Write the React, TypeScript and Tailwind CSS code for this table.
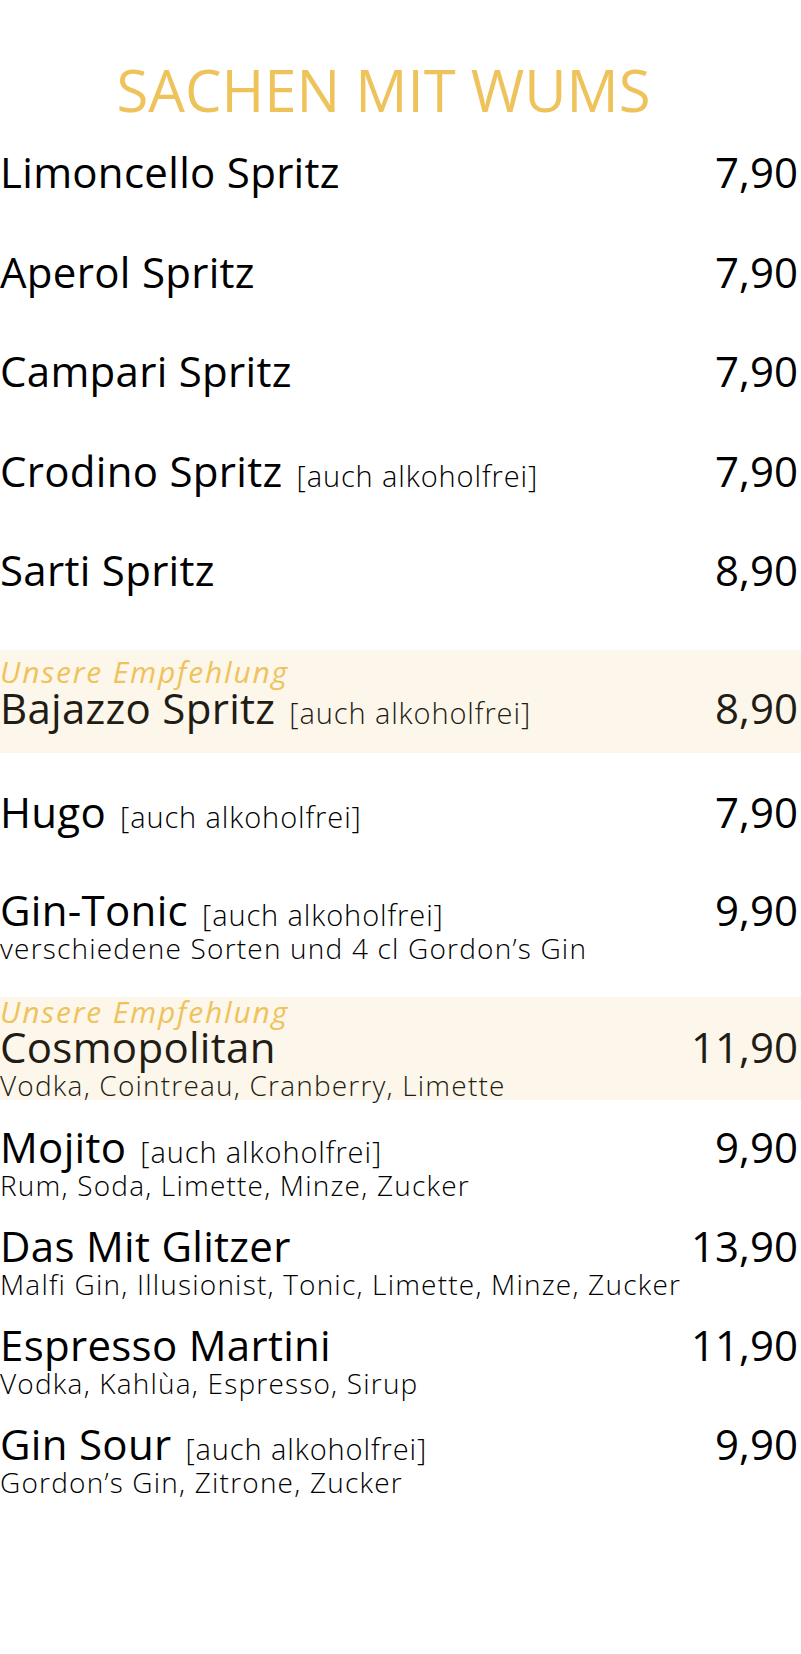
import React from "react";

type MainProps = { name: string; note?: boolean; price: string; dark?: boolean };

function MainLine({ name, note, price, dark }: MainProps) {
  return (
    <div
      className={`flex items-baseline justify-between pr-[3px] text-[42px] leading-[42px] ${
        dark ? "text-[#211c14]" : "text-black"
      }`}
    >
      <span className="whitespace-nowrap tracking-[0.3px]">
        {name}
        {note && (
          <span className="ml-[14px] text-[29px] leading-none font-light tracking-[0.9px]">
            [auch alkoholfrei]
          </span>
        )}
      </span>
      <span className="whitespace-nowrap">{price}</span>
    </div>
  );
}

function Desc({ children, dark }: { children: React.ReactNode; dark?: boolean }) {
  return (
    <div
      className={`mt-[4px] whitespace-nowrap text-[28px] leading-[26px] font-light tracking-[1.2px] ${
        dark ? "text-[#211c14]" : "text-black"
      }`}
    >
      {children}
    </div>
  );
}

function Tip() {
  return (
    <div className="whitespace-nowrap text-[30px] leading-[25px] italic font-normal tracking-[1.8px] text-[#efc35b]">
      Unsere Empfehlung
    </div>
  );
}

export default function App() {
  return (
    <div className="min-h-screen w-full bg-white font-['Open_Sans',sans-serif] text-black">
      <h1 className="pt-[61px] pr-[34px] text-center text-[58px] leading-[58px] font-normal text-[#efc35b]">
        SACHEN MIT WUMS
      </h1>

      <div className="mt-[32px] flex flex-col gap-[57.5px]">
        <MainLine name="Limoncello Spritz" price="7,90" />
        <MainLine name="Aperol Spritz" price="7,90" />
        <MainLine name="Campari Spritz" price="7,90" />
        <MainLine name="Crodino Spritz" note price="7,90" />
        <MainLine name="Sarti Spritz" price="8,90" />
      </div>

      <div className="mt-[59px] bg-[#fdf6eb] pt-[9px] pb-[24px]">
        <Tip />
        <div className="mt-[3px]">
          <MainLine name="Bajazzo Spritz" note price="8,90" dark />
        </div>
      </div>

      <div className="mt-[38px]">
        <MainLine name="Hugo" note price="7,90" />
      </div>

      <div className="mt-[56px]">
        <MainLine name="Gin-Tonic" note price="9,90" />
        <Desc>verschiedene Sorten und 4 cl Gordon’s Gin</Desc>
      </div>

      <div className="mt-[36px] bg-[#fdf6eb] pt-[2px] pb-[2px]">
        <Tip />
        <div className="mt-[2px]">
          <MainLine name="Cosmopolitan" price="11,90" dark />
        </div>
        <Desc dark>Vodka, Cointreau, Cranberry, Limette</Desc>
      </div>

      <div className="mt-[26px] flex flex-col gap-[27px]">
        <div>
          <MainLine name="Mojito" note price="9,90" />
          <Desc>Rum, Soda, Limette, Minze, Zucker</Desc>
        </div>
        <div>
          <MainLine name="Das Mit Glitzer" price="13,90" />
          <Desc>Malfi Gin, Illusionist, Tonic, Limette, Minze, Zucker</Desc>
        </div>
        <div>
          <MainLine name="Espresso Martini" price="11,90" />
          <Desc>Vodka, Kahlùa, Espresso, Sirup</Desc>
        </div>
        <div>
          <MainLine name="Gin Sour" note price="9,90" />
          <Desc>Gordon’s Gin, Zitrone, Zucker</Desc>
        </div>
      </div>
    </div>
  );
}
